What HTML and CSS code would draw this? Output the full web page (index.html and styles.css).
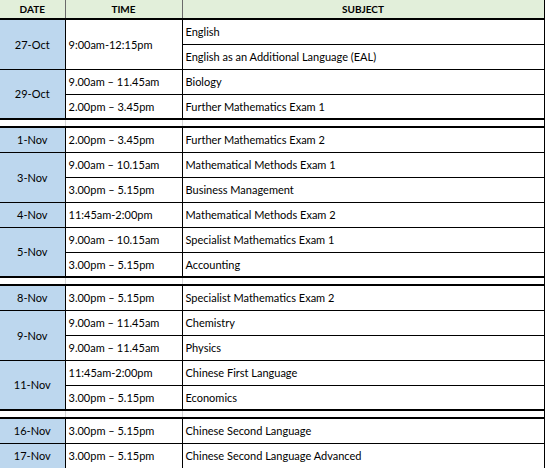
FILE: index.html
```html
<!DOCTYPE html>
<html>
<head>
<meta charset="utf-8">
<link rel="stylesheet" href="styles.css">
</head>
<body>
<table class="sched">
  <colgroup>
    <col class="c-date"><col class="c-time"><col class="c-subj">
  </colgroup>
  <thead>
    <tr class="head"><th>DATE</th><th>TIME</th><th class="subj">SUBJECT</th></tr>
  </thead>
  <tbody>
    <tr><td class="date" rowspan="2">27-Oct</td><td class="time" rowspan="2">9:00am-12:15pm</td><td class="subj">English</td></tr>
    <tr><td class="subj">English as an Additional Language (EAL)</td></tr>
    <tr><td class="date" rowspan="2">29-Oct</td><td class="time">9.00am – 11.45am</td><td class="subj">Biology</td></tr>
    <tr><td class="time">2.00pm – 3.45pm</td><td class="subj">Further Mathematics Exam 1</td></tr>
    <tr class="sep"><td></td><td></td><td class="subj"></td></tr>
    <tr><td class="date">1-Nov</td><td class="time">2.00pm – 3.45pm</td><td class="subj">Further Mathematics Exam 2</td></tr>
    <tr><td class="date" rowspan="2">3-Nov</td><td class="time">9.00am – 10.15am</td><td class="subj">Mathematical Methods Exam 1</td></tr>
    <tr><td class="time">3.00pm – 5.15pm</td><td class="subj">Business Management</td></tr>
    <tr><td class="date">4-Nov</td><td class="time">11:45am-2:00pm</td><td class="subj">Mathematical Methods Exam 2</td></tr>
    <tr><td class="date" rowspan="2">5-Nov</td><td class="time">9.00am – 10.15am</td><td class="subj">Specialist Mathematics Exam 1</td></tr>
    <tr><td class="time">3.00pm – 5.15pm</td><td class="subj">Accounting</td></tr>
    <tr class="sep"><td></td><td></td><td class="subj"></td></tr>
    <tr><td class="date">8-Nov</td><td class="time">3.00pm – 5.15pm</td><td class="subj">Specialist Mathematics Exam 2</td></tr>
    <tr><td class="date" rowspan="2">9-Nov</td><td class="time">9.00am – 11.45am</td><td class="subj">Chemistry</td></tr>
    <tr><td class="time">9.00am – 11.45am</td><td class="subj">Physics</td></tr>
    <tr><td class="date" rowspan="2">11-Nov</td><td class="time">11:45am-2:00pm</td><td class="subj">Chinese First Language</td></tr>
    <tr><td class="time">3.00pm – 5.15pm</td><td class="subj">Economics</td></tr>
    <tr class="sep"><td></td><td></td><td class="subj"></td></tr>
    <tr><td class="date">16-Nov</td><td class="time">3.00pm – 5.15pm</td><td class="subj">Chinese Second Language</td></tr>
    <tr><td class="date">17-Nov</td><td class="time">3.00pm – 5.15pm</td><td class="subj">Chinese Second Language Advanced</td></tr>
  </tbody>
</table>
</body>
</html>
```

FILE: styles.css
```css
html, body {
  margin: 0;
  padding: 0;
  background: #ffffff;
}

.sched {
  border-collapse: collapse;
  table-layout: fixed;
  width: 545px;
  font-family: Lato, "Liberation Sans", sans-serif;
  font-size: 11px;
  line-height: 13px;
  color: #000000;
}

.c-date { width: 65px; }
.c-time { width: 117px; }
.c-subj { width: 363px; }

.sched th,
.sched td {
  border: 1px solid #000000;
  padding: 0 3px;
  white-space: nowrap;
  overflow: hidden;
}

.sched th:first-child,
.sched td.date {
  border-left: none;
}

.head th {
  height: 18px;
  padding: 0;
  background: #e2efda;
  font-size: 10px;
  font-weight: 700;
  text-align: center;
  border-top: none;
  border-left-color: #6a6a6a;
  border-right-color: #6a6a6a;
  border-bottom: 2px solid #000000;
}

.sched tbody tr {
  height: 25px;
}

.sched td.date {
  background: #bdd7ee;
  text-align: center;
  padding: 0;
}

.sched td.time {
  text-align: left;
}

.sched .subj {
  border-right: 3px solid #000000;
}

.sched tbody td.subj {
  text-align: left;
}

.sched tr.sep {
  height: 6px;
}

.sched tr.sep td {
  padding: 0;
  height: 6px;
  background: #ffffff;
  border-top: 2px solid #000000;
  border-bottom: 2px solid #000000;
  border-left-color: #d4d4d4;
  border-right-color: #d4d4d4;
}

.sched tr.sep td:first-child {
  border-left: none;
}

.sched tr.sep td.subj {
  border-right: 3px solid #000000;
}
```
